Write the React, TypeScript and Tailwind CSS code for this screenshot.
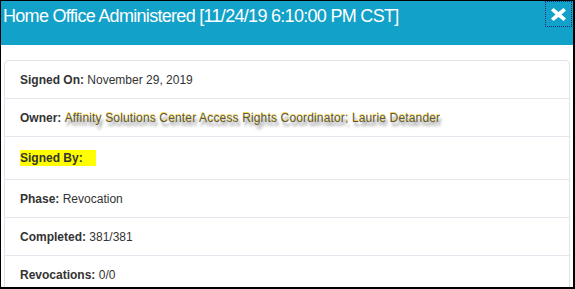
import React from "react";

const rows = [
  { label: "Signed On:", value: "November 29, 2019", h: "h-[38px]" },
  { label: "Owner:", value: "owner", h: "h-[38px]" },
  { label: "Signed By:", value: "", h: "h-[43px]" },
  { label: "Phase:", value: "Revocation", h: "h-[38px]" },
  { label: "Completed:", value: "381/381", h: "h-[38px]" },
  { label: "Revocations:", value: "0/0", h: "h-[38px]" },
];

const App = () => {
  return (
    <div
      className="w-[575px] h-[289px] overflow-hidden bg-white border-l border-t border-r-2 border-b-2 border-black text-[#333]"
      style={{ fontFamily: '"Liberation Sans", Arial, sans-serif' }}
    >
      {/* Header */}
      <div className="h-[44px] bg-[#12a1c9] flex items-start justify-between">
        <h1 className="text-white text-[18px] leading-[23px] tracking-[-0.7px] pl-[2px] pt-[4px] font-normal">
          Home Office Administered [11/24/19 6:10:00 PM CST]
        </h1>
        <button className="w-[27px] h-[26px] mr-[1px] border border-dotted border-[#1b2a6e] flex items-center justify-center">
          <svg width="17" height="15" viewBox="0 0 17 15">
            <path
              d="M3.5 1 L8.5 5 L13.5 1 L16 3.5 L11.5 7.5 L16 11.5 L13.5 14 L8.5 10 L3.5 14 L1 11.5 L5.5 7.5 L1 3.5 Z"
              fill="white"
            />
          </svg>
        </button>
      </div>

      {/* Details card */}
      <div className="mt-[15px] mx-[3px] border border-[#e2e2ea] rounded-[4px]">
        {rows.map((r, i) => (
          <div
            key={i}
            className={`${r.h} flex items-center pl-[15px] text-[12px] border-b border-[#e6e6ee]`}
          >
            {r.label === "Signed By:" ? (
              <span className="bg-[#ffff00] font-bold leading-[16px] inline-block w-[76px]">
                Signed By:
              </span>
            ) : (
              <p>
                <span className="font-bold">{r.label}</span>{" "}
                {r.value === "owner" ? (
                  <span className="text-[#5a5a4a] tracking-[0.15px] [text-shadow:0_-1px_0_#f7d44a,2px_4px_3px_rgba(0,0,0,0.45)]">
                    Affinity Solutions Center Access Rights Coordinator; Laurie Detander
                  </span>
                ) : (
                  r.value
                )}
              </p>
            )}
          </div>
        ))}
      </div>
    </div>
  );
};

export default App;
